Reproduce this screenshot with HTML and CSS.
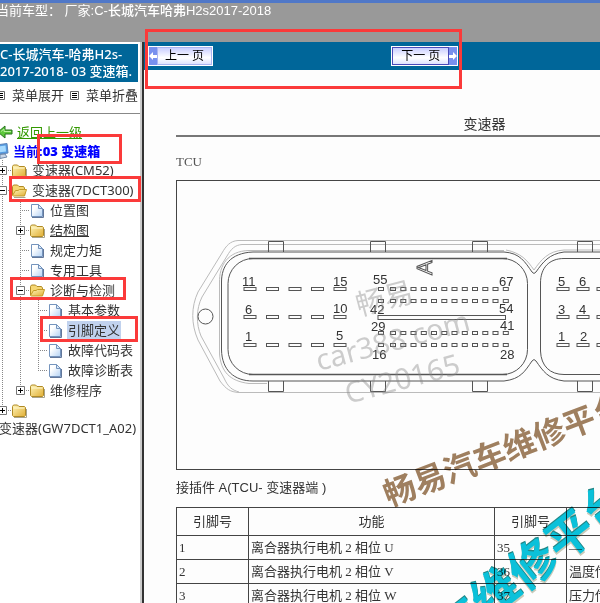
FILE: index.html
```html
<!DOCTYPE html>
<html lang="zh-CN">
<head>
<meta charset="utf-8">
<title>C-长城汽车哈弗H2s2017-2018</title>
<link rel="stylesheet" href="styles.css">
</head>
<body>
<svg class="sprites" aria-hidden="true">
  <defs>
    <linearGradient id="gold" x1="0" y1="0" x2="1" y2="1"><stop offset="0" stop-color="#fff5b8"/><stop offset="1" stop-color="#e0ae35"/></linearGradient>
    <linearGradient id="paper" x1="0" y1="0" x2="1" y2="1"><stop offset="0.3" stop-color="#fff"/><stop offset="1" stop-color="#b4d2f4"/></linearGradient>
    <symbol id="folder" viewBox="0 0 16 16"><path d="M1.500 13.500V4.500L2.500 3H6.500L8 4.500H13.500L14.500 5.500V13.500L13.500 14.500H2.500Z" fill="url(#gold)" stroke="#b08a25"/><path d="M2.500 6H13.500" stroke="#fff8d0"/><path d="M3 15.500H15.500V7" fill="none" stroke="#a8a38c"/></symbol>
    <symbol id="folder-open" viewBox="0 0 16 16"><path d="M1.500 13V4.500L2.500 3H6.500L8 4.500H12.500L13.500 6V13" fill="#f6d773" stroke="#b08a25"/><path d="M1.500 13.500L4.500 8.500H7L8.500 7.500H15.500L13.500 14H2.500Z" fill="url(#gold)" stroke="#c49b28"/><path d="M3 15.500H14.500" stroke="#a8a38c"/></symbol>
    <symbol id="page" viewBox="0 0 16 16"><path d="M2.500 2.500H9.500L13.500 6.500V14.500H2.500Z" fill="url(#paper)" stroke="#7594bd"/><path d="M9.500 2.500V6.500H13.500Z" fill="#dceafa" stroke="#7594bd"/><path d="M3 15.500H14.500V7" fill="none" stroke="#62779a"/></symbol>
    <symbol id="plus" viewBox="0 0 9 9"><path d="M.5.5H8.500V8.500H.5Z" fill="#fff" stroke="#777"/><path d="M2 4.500H7M4.500 2V7" stroke="#000"/></symbol>
    <symbol id="minus" viewBox="0 0 9 9"><path d="M.5.5H8.500V8.500H.5Z" fill="#fff" stroke="#777"/><path d="M2 4.500H7" stroke="#000"/></symbol>
    <symbol id="list" viewBox="0 0 9 9"><path d="M.5.5H8.500V8.500H.5Z" fill="#fff" stroke="#666"/><path d="M2 2.500H7M2 4.500H7M2 6.500H7" stroke="#000"/></symbol>
  </defs>
</svg>

<header class="banner">当前车型： 厂家:<span>C-长城汽车哈弗H2s2017-2018</span></header>

<div class="workspace">
  <nav class="sidebar">
    <h1 class="car-title">C-长城汽车-哈弗H2s-<br>2017-2018- 03 变速箱.</h1>
    <div class="menu-tools">
      <button type="button"><svg class="list-icon"><use href="#list"/></svg>菜单展开</button>
      <button type="button"><svg class="list-icon"><use href="#list"/></svg>菜单折叠</button>
    </div>
    <div class="tree">
      <a class="back" href="#up"><svg viewBox="0 0 16 14"><path d="M1 7L8 1V5H15V9H8V13Z" fill="#5dc83c" stroke="#24731a"/><path d="M4 6.500L7 4V6.500H14" fill="none" stroke="#b5f09d"/></svg><span>返回上一级</span></a>
      <div class="current"><svg viewBox="0 0 16 16"><path d="M3 2L14 .5L15 10L5 11.500Z" fill="#559be0" stroke="#5d83b8"/><path d="M5 3.500L12.500 2.500L13 8.500L6 9.500Z" fill="#a8dbff"/><path d="M7 11.500L12 11L14 14L7 15.500Z" fill="#c9d6e8" stroke="#7189a8"/></svg>当前:<b>03 变速箱</b></div>
      <ul>
        <li><div class="row"><i><svg class="box"><use href="#plus"/></svg></i><svg class="icon"><use href="#folder"/></svg><a href="#cm52">变速器(CM52)</a></div></li>
        <li><div class="row"><i><svg class="box"><use href="#minus"/></svg></i><svg class="icon"><use href="#folder-open"/></svg><a href="#7dct300">变速器(7DCT300)</a></div>
          <ul>
            <li><div class="row"><i></i><svg class="icon"><use href="#page"/></svg><a href="#position">位置图</a></div></li>
            <li><div class="row"><i><svg class="box"><use href="#plus"/></svg></i><svg class="icon"><use href="#folder"/></svg><a class="underlined" href="#structure">结构图</a></div></li>
            <li><div class="row"><i></i><svg class="icon"><use href="#page"/></svg><a href="#torque">规定力矩</a></div></li>
            <li><div class="row"><i></i><svg class="icon"><use href="#page"/></svg><a href="#tools">专用工具</a></div></li>
            <li><div class="row"><i><svg class="box"><use href="#minus"/></svg></i><svg class="icon"><use href="#folder-open"/></svg><a href="#diagnosis">诊断与检测</a></div>
              <ul>
                <li><div class="row"><i></i><svg class="icon"><use href="#page"/></svg><a href="#params">基本参数</a></div></li>
                <li><div class="row"><i></i><svg class="icon"><use href="#page"/></svg><a class="selected" href="#pins">引脚定义</a></div></li>
                <li><div class="row"><i></i><svg class="icon"><use href="#page"/></svg><a href="#codes">故障代码表</a></div></li>
                <li><div class="row"><i></i><svg class="icon"><use href="#page"/></svg><a href="#faults">故障诊断表</a></div></li>
              </ul>
            </li>
            <li><div class="row"><i><svg class="box"><use href="#plus"/></svg></i><svg class="icon"><use href="#folder"/></svg><a href="#repair">维修程序</a></div></li>
          </ul>
        </li>
        <li><div class="row"><i><svg class="box"><use href="#plus"/></svg></i><svg class="icon"><use href="#folder"/></svg></div><a class="wrapped" href="#gw7dct1">变速器(GW7DCT1_A02)</a></li>
      </ul>
    </div>
  </nav>

  <main class="content">
    <div class="toolbar">
      <button class="pager prev" type="button"><svg viewBox="0 0 8 18"><path d="M0 9L4 5V8H8V11H4V13Z" fill="#fff"/></svg><span>上一 页</span></button>
      <button class="pager next" type="button"><span>下一 页</span><svg viewBox="0 0 8 18"><path d="M8 9L4 5V8H0V11H4V13Z" fill="#fff"/></svg></button>
    </div>
    <article class="document">
      <h2>变速器</h2>
      <p class="unit">TCU</p>
      <figure>
        <svg class="diagram" viewBox="178 182 615 288" role="img" aria-label="TCU">
          <defs>
            <g id="pin"><rect x="-6" y="-1.500" width="12" height="3"/></g>
            <g id="wide-row"><use href="#pin" x="251"/><use href="#pin" x="273.500"/><use href="#pin" x="296"/><use href="#pin" x="318.500"/><use href="#pin" x="341"/></g>
            <g id="right-row"><use href="#pin" x="564"/><use href="#pin" x="584"/><use href="#pin" x="604"/><use href="#pin" x="624"/></g>
            <g id="small"><rect x="-2.500" y="-1.500" width="5" height="3"/></g>
            <g id="small-row"><use href="#small" x="382"/><use href="#small" x="394"/><use href="#small" x="404.300"/><use href="#small" x="414.500"/><use href="#small" x="424.800"/><use href="#small" x="435"/><use href="#small" x="445.300"/><use href="#small" x="455.500"/><use href="#small" x="465.800"/><use href="#small" x="476"/><use href="#small" x="486.300"/><use href="#small" x="496.500"/><use href="#small" x="506.800"/></g>
            <g id="tabs"><path d="M269.500 253V242.500H284.500V253M371.500 253V242.500H386.500V253M473.500 253V242.500H488.500V253M578.500 253V242.500H593.500V253"/></g>
          </defs>
          <g fill="none" stroke="#bbb">
            <path d="M793 241.500H239C231 242 227 247 223 254L199 293C192 308 192 325 199 341L221 382C227 390 231 393 240 393.500H793"/>
            <path d="M793 245.500H243C236 246 232 250 228 257L203 298C197 310 197 325 202 337L225 379C229 388 233 391 240 393"/>
            <path d="M505 251.500H250C229 252 220 266 220.500 284V355C222 372 230 382 250 384.500H268"/>
            <path d="M507 251C522 254 528 261 535 271C542 261 549 252 565 251H793"/>
          </g>
          <g fill="none" stroke="#555">
            <path d="M793 253H565C550 255 544 263 537 273Q535 276 533 273C526 263 521 254 505 253H254C231 254 222.500 267 222.500 283V351C223 371 235 382 254 382H505C522 380 526 372 533 362Q535 359 537 362C544 372 549 380 565 382H793"/>
            <path d="M793 259.500H565C550 259.500 541.500 269 541.500 284V352C542 367 551 375.500 565 375.500H793"/>
            <rect x="229" y="259.500" width="299.500" height="116" rx="25"/>
            <path d="M250 259.500H508M250 375.500H508" stroke-width="1.400"/>
            <use href="#tabs"/><use href="#tabs" transform="matrix(1 0 0 -1 0 635)"/>
            <circle cx="206.500" cy="317.500" r="7.500"/>
            <use href="#wide-row" y="290"/><use href="#wide-row" y="318"/><use href="#wide-row" y="346"/>
            <use href="#right-row" y="290"/><use href="#right-row" y="318"/><use href="#right-row" y="346"/>
            <use href="#small-row" y="290"/><use href="#small-row" y="302"/><use href="#small-row" y="334"/><use href="#small-row" y="346"/>
            <rect x="379" y="316.500" width="127.500" height="4"/>
            <text class="outline" transform="translate(433 276) rotate(-90)" x="0" y="0">A</text>
          </g>
          <g class="pin-labels">
            <text x="243" y="287">11</text><text x="334" y="287">15</text><text x="246" y="315">6</text><text x="334" y="314">10</text><text x="246" y="342">1</text><text x="337" y="341">5</text>
            <text x="374" y="285">55</text><text x="500" y="287">67</text><text x="371" y="315">42</text><text x="500" y="314">54</text><text x="372" y="332">29</text><text x="501" y="331">41</text><text x="373" y="360">16</text><text x="501" y="360">28</text>
            <text x="559" y="287">5</text><text x="580" y="287">6</text><text x="559" y="315">3</text><text x="580" y="315">4</text><text x="559" y="342">1</text><text x="581" y="342">2</text>
          </g>
          <g class="faint-mark">
            <text transform="translate(360 317) rotate(-15)">畅易</text>
            <text transform="translate(320 372) rotate(-15)">car388 com</text>
            <text transform="translate(349 405) rotate(-15)">CY20165</text>
          </g>
        </svg>
      </figure>
      <p class="caption">接插件 A(TCU- 变速器端 )</p>
      <table>
        <colgroup><col class="pin-col"><col class="use-col"><col class="pin-col"><col></colgroup>
        <thead><tr><th>引脚号</th><th>功能</th><th>引脚号</th><th>功能</th></tr></thead>
        <tbody>
          <tr><td>1</td><td>离合器执行电机 2 相位 U</td><td>35</td><td>—</td></tr>
          <tr><td>2</td><td>离合器执行电机 2 相位 V</td><td>36</td><td>温度传</td></tr>
          <tr><td>3</td><td>离合器执行电机 2 相位 W</td><td>37</td><td>压力传</td></tr>
        </tbody>
      </table>
      <div class="mark brown-mark">畅易汽车维修平台</div>
      <div class="mark cyan-mark">车维修平台</div>
    </article>
  </main>
</div>

<div class="callout callout-pager"></div>
<div class="callout callout-current"></div>
<div class="callout callout-gearbox"></div>
<div class="callout callout-diagnosis"></div>
<div class="callout callout-pins"></div>
</body>
</html>
```
FILE: styles.css
```css
* { box-sizing: border-box; }
body {
  margin: 0;
  height: 100vh;
  position: relative;
  display: flex;
  flex-direction: column;
  overflow: hidden;
  background: #fff;
  color: #333;
  font: 13px/20px "Noto Sans", "Noto Sans CJK SC", sans-serif;
}
button { border: 0; padding: 0; background: none; color: inherit; font: inherit; }
.sprites { position: absolute; width: 0; height: 0; }

.banner {
  flex: none;
  height: 42px;
  border-top: 3px solid #5078c8;
  background: #999;
  color: #fff;
  font: 13px/16px "Liberation Sans", "Noto Sans CJK SC", sans-serif;
  text-indent: -4px;
  white-space: nowrap;
}
.banner span { font-weight: 500; }

.workspace { flex: 1; min-height: 0; display: flex; }
.sidebar {
  flex: none;
  width: 144px;
  overflow: hidden;
  padding-top: 2px;
  border-right: 2px solid #333;
  box-shadow: inset -2px 0 #ccc;
}
.car-title {
  margin: 0 4px 0 0;
  height: 38px;
  padding-top: 2px;
  background: #069;
  color: #fff;
  font-size: 13px;
  font-weight: 500;
  line-height: 17px;
  white-space: nowrap;
}
.menu-tools {
  display: flex;
  gap: 6px;
  height: 32px;
  margin: 0 2px 0 -4px;
  padding-top: 3px;
  border-bottom: 1px solid #888;
}
.menu-tools button { display: flex; align-items: center; gap: 7px; height: 20px; white-space: nowrap; }
.list-icon { width: 9px; height: 9px; flex: none; }

.tree { margin-left: -7px; padding-top: 8px; white-space: nowrap; }
.tree a { color: #333; text-decoration: none; }
.tree .back { display: flex; align-items: center; gap: 4px; height: 20px; padding-left: 4px; color: #390; }
.tree .back svg { width: 16px; height: 14px; }
.tree .back span { text-decoration: underline; }
.current { display: flex; align-items: center; height: 18px; color: #00f; font-weight: 700; }
.current svg { width: 16px; height: 16px; margin-right: 4px; }
.tree ul { margin: 0; padding: 0; list-style: none; }
.tree ul ul { padding-left: 18px; }
.tree li {
  background: repeating-linear-gradient(#888 0 1px, transparent 1px 2px) 9px 0 / 1px 100% no-repeat;
}
.tree li:last-child { background-size: 1px 10px; }
.row {
  display: flex;
  align-items: center;
  height: 20px;
  background: repeating-linear-gradient(90deg, #888 0 1px, transparent 1px 2px) 9px 10px / 9px 1px no-repeat;
}
.row i { width: 18px; padding-left: 5px; line-height: 0; }
.box { width: 9px; height: 9px; }
.icon { width: 16px; height: 16px; margin-right: 4px; }
.row a { padding: 0 1px; line-height: 18px; }
.row a.underlined { text-decoration: underline; }
.row a.selected { background: #c1d2ee; }
.wrapped { display: block; padding-left: 6px; line-height: 16px; }

.content { flex: 1; min-width: 0; overflow: hidden; background: #fdfdfd; }
.toolbar { display: flex; align-items: flex-start; gap: 178px; height: 28px; padding: 4px 0 0 4px; background: #069; }
.pager {
  display: flex;
  height: 20px;
  border: 1px solid #fff;
  background: #5a6cc8;
  color: #000;
  font-size: 12px;
  line-height: 16px;
}
.pager span { padding: 0 7px; border: 1px solid #aab4f0; background: linear-gradient(#c9ceff, #fff 60%, #dfe3ff); }
.pager svg { width: 8px; height: 18px; background: #7890ee; }
.pager.next span { padding: 0 8px; border-color: #4a4ab8; }

.document {
  position: relative;
  width: 617px;
  margin-left: 32px;
  color: #333;
  font-family: "Liberation Sans", "Noto Sans CJK SC", sans-serif;
}
.document h2 {
  margin: 0;
  padding-top: 44px;
  height: 67px;
  border-bottom: 2px solid #777;
  font-size: 14px;
  font-weight: 400;
  line-height: 20px;
  text-align: center;
}
.unit { margin: 0; padding-top: 15px; height: 43px; color: #555; font-family: "Liberation Serif", serif; }
figure { margin: 0; border: 1px solid #444; }
.diagram { display: block; width: 100%; }
.diagram text { stroke: none; }
.pin-labels { fill: #333; font: 13px "Liberation Sans", sans-serif; }
.diagram .outline { stroke: #555; font: 22px "Liberation Sans", sans-serif; }
.faint-mark { fill: #888; fill-opacity: .42; font: 29px "Noto Sans", "Noto Sans CJK SC", sans-serif; }
.caption { margin: 0; padding: 8px 0 9px; line-height: 20px; }
table { width: 100%; table-layout: fixed; border-collapse: collapse; }
.pin-col { width: 72px; }
.use-col { width: 246px; }
th, td { height: 24px; padding: 0 2px; border: 1px solid #444; line-height: 20px; }
th { height: 28px; font-weight: 400; }
td { font-family: "Liberation Serif", "Noto Sans CJK SC", serif; }

.mark {
  position: absolute;
  white-space: nowrap;
  transform-origin: 0 50%;
  font-family: "Noto Sans CJK SC", sans-serif;
  font-weight: 700;
  mix-blend-mode: multiply;
}
.brown-mark { left: 208px; top: 404px; color: #a08060; font-size: 32px; line-height: 40px; transform: rotate(-21deg); }
.cyan-mark {
  left: 262px;
  top: 534px;
  color: #0bc3dc;
  font-size: 47px;
  line-height: 60px;
  text-shadow: 1px -1px #288, -1px 2px #ccb;
  transform: rotate(-38deg);
}

.callout { position: absolute; border: 3px solid #fb3a3a; pointer-events: none; }
.callout-pager { left: 145px; top: 29px; width: 317px; height: 60px; }
.callout-current { left: 37px; top: 134px; width: 85px; height: 30px; }
.callout-gearbox { left: 9px; top: 176px; width: 132px; height: 26px; }
.callout-diagnosis { left: 10px; top: 277px; width: 116px; height: 23px; }
.callout-pins { left: 40px; top: 316px; width: 98px; height: 26px; }
```
